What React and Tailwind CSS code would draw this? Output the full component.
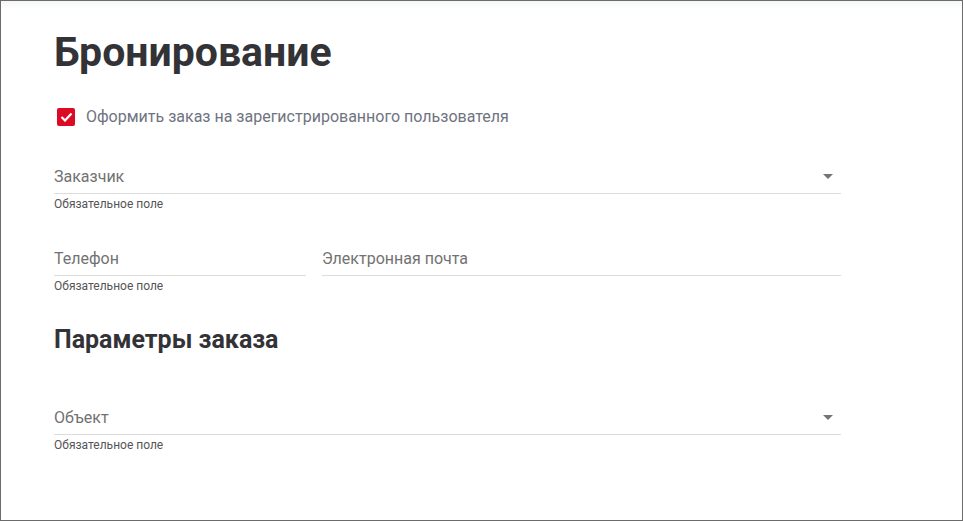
import React, { useState } from 'react';

function Arrow() {
  return (
    <svg width="10" height="5" viewBox="0 0 10 5" className="shrink-0">
      <path d="M0 0 L10 0 L5 5 Z" fill="#757575" />
    </svg>
  );
}

function Field({ label, helper, select, className = '' }) {
  return (
    <div className={className}>
      <div className="flex items-center h-[34px] border-b border-[#dcdcdc]">
        <span className="flex-1 text-[16px] text-[#727272]">{label}</span>
        {select && <span className="mr-[8px]"><Arrow /></span>}
      </div>
      <div className="h-[20px] pt-[3px] text-[12px] leading-[14px] text-[#555]">{helper}</div>
    </div>
  );
}

export default function App() {
  const [forUser, setForUser] = useState(true);

  return (
    <div
      className="h-[521px] w-full border border-[#6b6b6b] bg-white text-[#333] overflow-hidden"
      style={{ fontFamily: 'Roboto, "Noto Sans", sans-serif' }}
    >
      <div className="h-[8px] bg-gradient-to-b from-[#f4f6f8] to-white" />
      <div className="pl-[53px] w-[840px]">
        <h1 className="mt-[19px] text-[41px] leading-[48px] font-bold text-[#333337]">Бронирование</h1>

        <label className="mt-[29px] flex items-center gap-[11px] cursor-pointer">
          <span
            onClick={() => setForUser(!forUser)}
            className={`ml-[3px] w-[18px] h-[18px] rounded-[2px] flex items-center justify-center ${forUser ? 'bg-[#dc0a22]' : 'border-2 border-[#777]'}`}
          >
            {forUser && (
              <svg width="13" height="10" viewBox="0 0 13 10">
                <path d="M1.5 5 L5 8.5 L11.5 1.5" stroke="white" strokeWidth="2.2" fill="none" />
              </svg>
            )}
          </span>
          <span className="text-[16px] text-[#6f7380]">Оформить заказ на зарегистрированного пользователя</span>
        </label>

        <Field className="mt-[31px]" label="Заказчик" helper="Обязательное поле" select />

        <div className="mt-[28px] flex gap-[16px]">
          <Field className="w-[252px]" label="Телефон" helper="Обязательное поле" />
          <Field className="flex-1" label="Электронная почта" />
        </div>

        <h2 className="mt-[29px] text-[25px] leading-[30px] font-bold text-[#333337]">Параметры заказа</h2>

        <Field className="mt-[46px]" label="Объект" helper="Обязательное поле" select />
      </div>
    </div>
  );
}
